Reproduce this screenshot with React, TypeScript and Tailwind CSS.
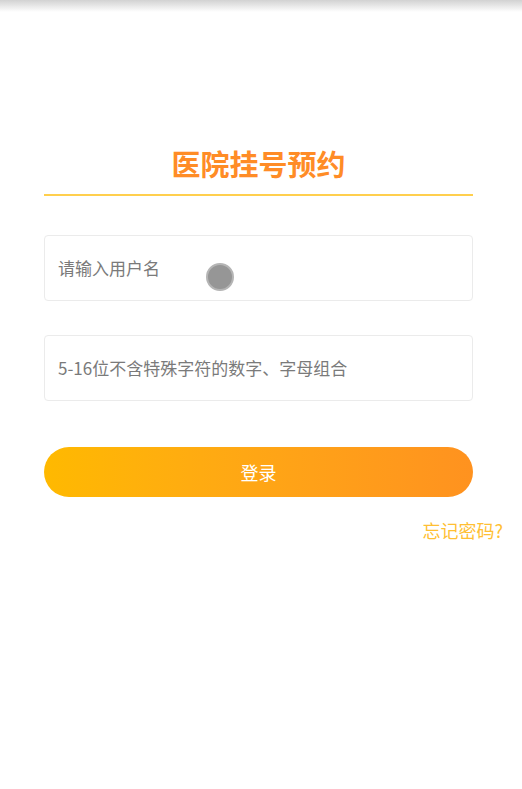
import React from "react";

const font = { fontFamily: '"Noto Sans CJK SC", "Noto Sans", sans-serif' };

function Field({ placeholder }: { placeholder: string }) {
  return (
    <div className="flex h-[66px] items-center rounded-[4px] border border-[#ebebeb] bg-white px-[13px]">
      <span className="text-[17px] text-[#7a7a7a]">{placeholder}</span>
    </div>
  );
}

export default function App() {
  return (
    <div className="relative min-h-[789px] bg-white" style={font}>
      <div className="h-[12px] bg-gradient-to-b from-[#d2d2d2] to-white" />

      <div className="ml-[44px] w-[429px]">
        <div className="mt-[131px] h-[40px] text-center text-[29px] font-bold leading-[40px] text-[#ff8c26]">
          医院挂号预约
        </div>
        <div className="mt-[11px] h-[2px] bg-[#ffcf4d]" />

        <div className="mt-[39px]">
          <Field placeholder="请输入用户名" />
        </div>
        <div className="mt-[34px]">
          <Field placeholder="5-16位不含特殊字符的数字、字母组合" />
        </div>

        <button className="mt-[46px] flex h-[50px] w-full items-center justify-center rounded-full bg-gradient-to-r from-[#ffb900] to-[#ff921f] text-[18px] text-white">
          登录
        </button>
      </div>

      <div className="mt-[21px] pr-[19px] text-right text-[18px] leading-[24px] text-[#ffbf33]">
        忘记密码?
      </div>

      <div className="absolute left-[206px] top-[263px] h-[28px] w-[28px] rounded-full border-2 border-[#b5b5b5] bg-[#969696]" />
    </div>
  );
}
